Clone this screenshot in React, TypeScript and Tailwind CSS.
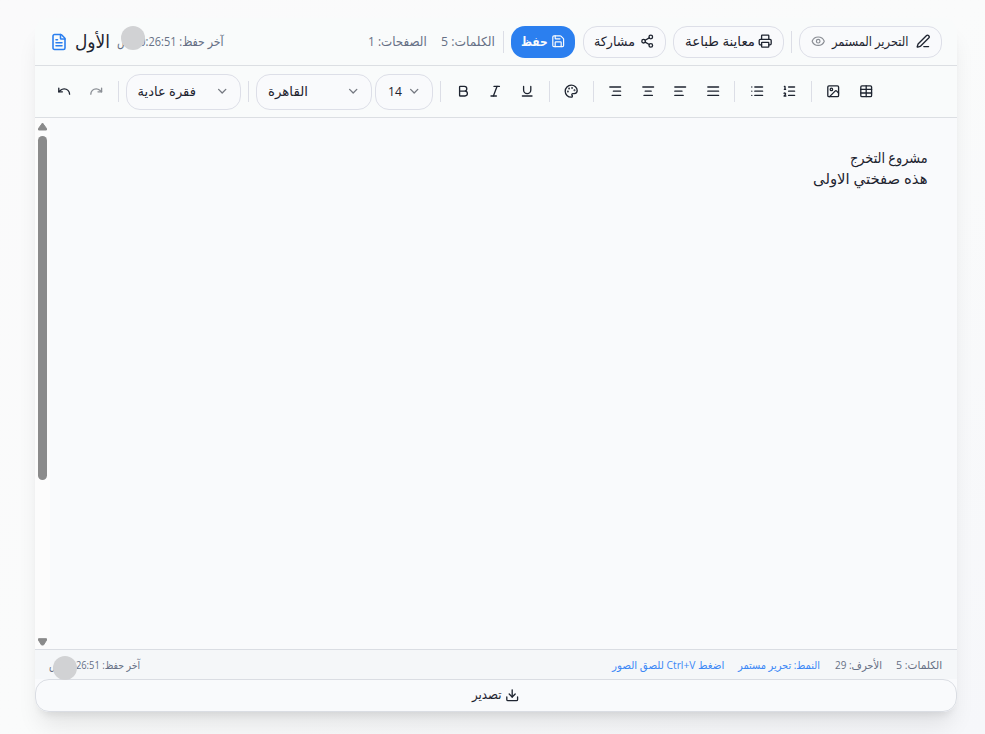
import { useLayoutEffect, useRef, useState, type ReactNode } from 'react';
import {
  AlignCenter, AlignJustify, AlignLeft, AlignRight, Bold, ChevronDown, Download, Eye, FileText,
  Image, Italic, List, ListOrdered, Palette, PenLine, Printer, Redo, Save, Share2, Table, Underline, Undo,
} from 'lucide-react';

/* Keeps a label at a constant width whichever Arabic face is available. */
function Label({ width, className = '', children }: { width: number; className?: string; children: ReactNode }) {
  const ref = useRef<HTMLSpanElement>(null);
  const [scale, setScale] = useState(1);
  useLayoutEffect(() => {
    if (ref.current && ref.current.offsetWidth > 0) setScale(width / ref.current.offsetWidth);
  }, [width]);
  return (
    <span dir="rtl" className={`flex shrink-0 justify-start whitespace-nowrap ${className}`} style={{ width }}>
      <span ref={ref} className="shrink-0 origin-right" style={{ transform: `scaleX(${scale})` }}>{children}</span>
    </span>
  );
}

function Divider({ tall = false }: { tall?: boolean }) {
  return <div className={`shrink-0 bg-[#dcdee6] ${tall ? 'h-[22px] w-px' : 'mx-[3.6px] h-[21px] w-[0.9px]'}`} />;
}

function Tool({ children, faded = false }: { children: ReactNode; faded?: boolean }) {
  return (
    <button className={`flex h-[29px] w-[28.8px] shrink-0 items-center justify-center ${faded ? 'opacity-50' : ''}`}>
      {children}
    </button>
  );
}

const pill = 'flex h-8 shrink-0 items-center rounded-[14px] border border-[#dddfe8] bg-[#f9fafc]';
const select = 'flex h-9 shrink-0 items-center justify-between rounded-[14px] border border-[#dddfe8] bg-[#f9fafc] pl-[11px] pr-[11px]';

export default function App() {
  const i = 14.4;
  return (
    <div className="h-[734px] w-[985px] overflow-hidden bg-gradient-to-br from-[#fafafb] via-[#fafbfb] to-[#f6f7fa] px-[35px] pt-[18px] font-['Open_Sans','DejaVu_Sans',sans-serif] text-[13px] text-[#1e2430]">
      <main dir="ltr" className="flex h-[694px] w-[922px] flex-col rounded-[14px] bg-[#f9fafc] shadow-[0_18px_23px_-5px_rgba(0,0,0,0.09),0_7px_9px_-5px_rgba(0,0,0,0.09)]">
        <header className="flex h-12 shrink-0 items-center rounded-t-[14px] border-b border-[#dcdfe3] bg-[#f9fbfb] pl-[15px] pr-[15px]">
          <FileText size={18} strokeWidth={2.1} className="shrink-0 text-[#2b7fef]" />
          <Label width={35} className="ml-[7px] pb-px text-[18px] leading-6">الأول</Label>
          <div className="relative ml-[7px]">
            <Label width={107} className="text-[12.5px] leading-5 text-[#667085]">آخر حفظ: 10:26:51 ص</Label>
            <div className="absolute left-[4px] top-[-6px] size-6 rounded-full bg-[#d1d2d4]" />
          </div>
          <div className="flex-1" />
          <Label width={59} className="text-[12.5px] leading-5 text-[#667085]">الصفحات: 1</Label>
          <Label width={54} className="ml-[14px] mr-px text-[12.5px] leading-5 text-[#667085]">الكلمات: 5</Label>
          <div className="ml-[7px] flex items-center"><Divider tall /></div>
          <button className="ml-[7px] flex h-8 w-16 items-center justify-center gap-[3px] rounded-[14px] bg-[#2b7fef] text-[#f9fafc]">
            <Label width={27} className="text-[13px] font-bold">حفظ</Label>
            <Save size={i} />
          </button>
          <button className={`${pill} ml-2 w-[83px] justify-center gap-[5px]`}>
            <Label width={41}>مشاركة</Label>
            <Share2 size={i} strokeWidth={2.2} />
          </button>
          <button className={`${pill} ml-[7px] w-[111px] justify-center gap-[3px]`}>
            <Label width={70}>معاينة طباعة</Label>
            <Printer size={i} strokeWidth={2.2} />
          </button>
          <div className="ml-[7px]"><Divider tall /></div>
          <button className={`${pill} ml-[7px] w-[143px] justify-between px-[11px]`}>
            <Eye size={i} className="opacity-50" />
            <Label width={77}>التحرير المستمر</Label>
            <PenLine size={i} strokeWidth={2.2} />
          </button>
        </header>

        <div className="flex h-[52px] shrink-0 items-center gap-[3.6px] border-b border-[#dcdfe3] bg-[#f9fbfb] pl-[14.4px] [&_svg]:stroke-[2.2]">
          <Tool><Undo size={i} /></Tool>
          <Tool faded><Redo size={i} /></Tool>
          <Divider />
          <button className={`${select} w-[115.2px]`}>
            <Label width={58}>فقرة عادية</Label>
            <ChevronDown size={i} className="opacity-60" />
          </button>
          <Divider />
          <button className={`${select} w-[115.6px]`}>
            <Label width={40}>القاهرة</Label>
            <ChevronDown size={i} className="opacity-60" />
          </button>
          <button className={`${select} w-[57.6px]`}>
            <Label width={14}>14</Label>
            <ChevronDown size={i} className="opacity-60" />
          </button>
          <Divider />
          <Tool><Bold size={i} /></Tool>
          <Tool><Italic size={i} /></Tool>
          <Tool><Underline size={i} /></Tool>
          <Divider />
          <Tool><Palette size={i} /></Tool>
          <Divider />
          <Tool><AlignRight size={i} /></Tool>
          <Tool><AlignCenter size={i} /></Tool>
          <Tool><AlignLeft size={i} /></Tool>
          <Tool><AlignJustify size={i} /></Tool>
          <Divider />
          <Tool><List size={i} /></Tool>
          <Tool><ListOrdered size={i} /></Tool>
          <Divider />
          <Tool><Image size={i} /></Tool>
          <Tool><Table size={i} /></Tool>
        </div>

        <section className="flex h-[531px] shrink-0">
          <div className="flex w-[15px] shrink-0 flex-col items-center bg-[#fcfcfc] pb-[3px] pt-[4px]">
            <svg width="9" height="9" viewBox="0 0 9 9" className="shrink-0"><path d="M4.5 1 8.5 6.5V8h-8V6.5Z" fill="#8b8b8b" stroke="#8b8b8b" strokeLinejoin="round" /></svg>
            <div className="mt-[5px] h-[344px] w-[9px] shrink-0 rounded-full bg-[#8b8b8b]" />
            <div className="flex-1" />
            <svg width="9" height="8" viewBox="0 0 9 8" className="shrink-0"><path d="M.5 .7h8v1.5L5.5 7h-2l-3-4.8Z" fill="#8b8b8b" stroke="#8b8b8b" strokeLinejoin="round" /></svg>
          </div>
          <div className="flex flex-1 flex-col pr-[29px] pt-[29px] text-[15px] leading-[21px]" dir="ltr">
            <Label width={78} className="self-end">مشروع التخرج</Label>
            <Label width={115} className="self-end">هذه صفختي الاولى</Label>
          </div>
        </section>

        <footer className="flex h-[30px] shrink-0 items-center border-t border-[#dadde3] bg-[#f5f7f9] pl-[14px] pr-[15px] text-[11px] leading-4 text-[#667085]">
          <div className="relative">
            <Label width={91}>آخر حفظ: 10:26:51 ص</Label>
            <div className="absolute left-[4px] top-[-1px] size-6 rounded-full bg-[#d1d2d4]" />
          </div>
          <div className="flex-1" />
          <Label width={112} className="text-[#3c88f6]">اضغط Ctrl+V للصق الصور</Label>
          <Label width={82} className="ml-[14px] text-[#3c88f6]">النمط: تحرير مستمر</Label>
          <Label width={47} className="ml-[15px]">الأحرف: 29</Label>
          <Label width={46} className="ml-[14px]">الكلمات: 5</Label>
        </footer>
        <button className="flex h-[33px] w-full shrink-0 items-center justify-center gap-[3px] rounded-[14px] border border-[#dadde3] bg-[#f9fafc] pr-px">
          <Label width={30} className="pb-px">تصدير</Label>
          <Download size={i} strokeWidth={2.2} />
        </button>
      </main>
    </div>
  );
}
